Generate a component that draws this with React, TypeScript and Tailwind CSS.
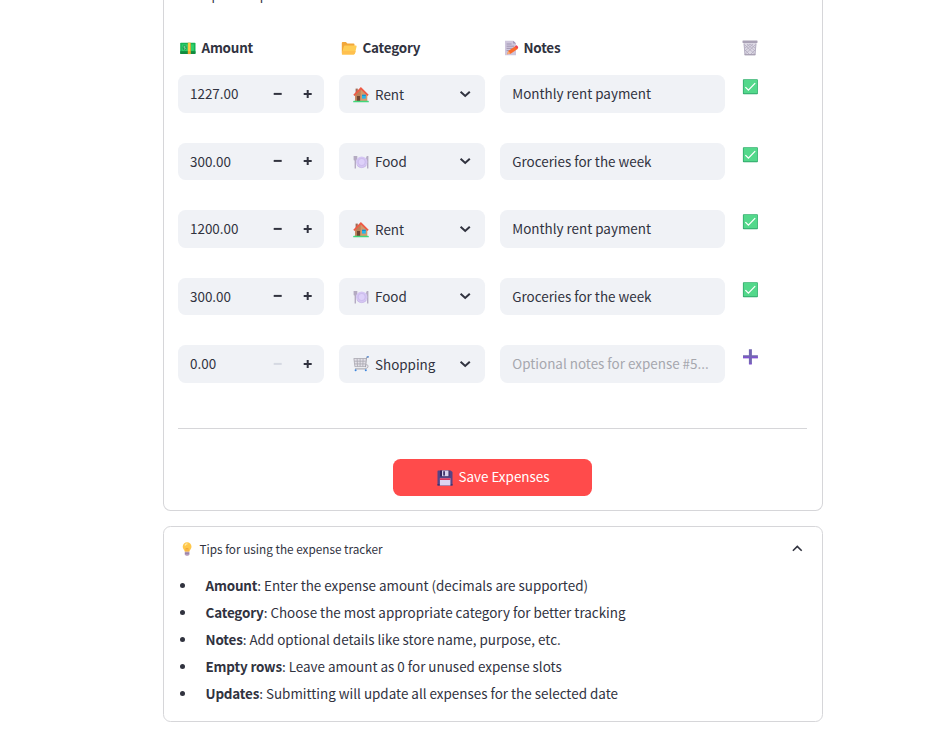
import type { ReactNode } from "react";

function Icon({ children, className = "" }: { children: ReactNode; className?: string }) {
  return (
    <svg viewBox="0 0 16 16" className={`h-4 w-4 shrink-0 ${className}`}>
      {children}
    </svg>
  );
}

const Money = () => (
  <Icon>
    <rect x="0.2" y="2.8" width="15.3" height="11.3" rx="0.8" fill="#16b455" />
    <path d="M.2 11.3h15.3v2a.8.8 0 0 1-.8.8H1a.8.8 0 0 1-.8-.8z" fill="#128a3f" />
    <rect x="1.7" y="4.3" width="12.2" height="6.6" fill="#2fd06d" />
    <ellipse cx="4.6" cy="7.7" rx="2.1" ry="2.6" fill="#139a49" />
    <path d="M5.4 6.3H4v1.4h1.2v1.4H3.8" stroke="#a7e6b8" strokeWidth=".7" fill="none" />
    <rect x="7.8" y="2.8" width="3" height="11.3" fill="#f0a72c" />
    <rect x="8.3" y="2.8" width="1.6" height="8.4" fill="#ffd34a" />
  </Icon>
);
const Folder = () => (
  <Icon>
    <path d="M.8 3q0-.9.9-.9h3.2l1.5 1.5h6.2q.9 0 .9.9V13H.8z" fill="#f2a73a" />
    <path d="M2.8 6.4q.2-.8 1-.8h11q1 0 .8.9l-1.5 6.6q-.3 1.3-1.4 1.3H1.4q-.8 0-.5-1z" fill="#ffcd55" />
    <path d="M1.6 11l-.7 2.4q-.3 1 .5 1h11.3q1.1 0 1.4-1.3l.5-2.1z" fill="#ffc04f" />
  </Icon>
);
const Memo = () => (
  <Icon>
    <path d="M1 .7h8.2L12 3.4v11.8H1z" fill="#cfc6dc" />
    <path d="M9.2.7V3.4H12z" fill="#9f93b3" />
    <path d="M2.6 4h5M2.6 6.2h7.4M2.6 8.4h6M2.6 10.6h3" stroke="#9b91ae" strokeWidth=".9" />
    <path d="M3.2 14.3l1-3.3 7.4-5 2.4 2.7-7.4 5z" fill="#fb6c2d" />
    <path d="M3.2 14.3l1-3.3 2.3 2.6z" fill="#f5b27c" />
    <path d="M11 6.4l1-.9q.7-.4 1.4.4l.6.8q.6.8-.1 1.4l-.9.7z" fill="#ef4052" />
  </Icon>
);
const Trash = () => (
  <Icon>
    <path d="M1.7 3h12.6l-1 12.1H2.7z" fill="#dcd8e4" />
    <path d="M2.4 4.5l10.8 10M13.6 4.5L2.8 14.5M5 4l8 7M11 4l-8 7M8 4l5 4M8 4L3 8M3 10l5 5M13 10l-5 5" stroke="#b0aabd" strokeWidth=".75" fill="none" />
    <path d="M2 3.5l1 11.3h10l1-11.3" fill="none" stroke="#b4aec2" />
    <rect x=".5" y=".6" width="15" height="2.3" rx=".4" fill="#aaa2b6" />
    <path d="M2.6 14.7h10.8" stroke="#a59daf" />
  </Icon>
);
const Check = () => (
  <Icon>
    <rect x=".9" y=".2" width="15" height="15" rx=".8" fill="#32a96c" />
    <rect x="1.7" y=".7" width="13.6" height="13.6" rx=".4" fill="#53d88b" />
    <path d="M3.4 8.1l3 3 6.8-7" fill="none" stroke="#fff" strokeWidth="1.3" />
  </Icon>
);
const House = () => (
  <Icon className="mt-[2px]">
    <rect x="2.6" y="1.6" width="2.2" height="4.6" fill="#a06a55" />
    <path d="M2.2 7.8L8 1.8l6.3 6v6.8H2.2z" fill="#d49a6c" />
    <path d="M2.2 7.8L7.6 2.2v12.4H2.2z" fill="#bd8059" />
    <path d="M.9 8.4L7.9 1.3l7.2 7.1" fill="none" stroke="#ee5a45" strokeWidth="1.7" />
    <rect x="4" y="9" width="3" height="5.5" fill="#704634" />
    <rect x="9" y="7.8" width="3.8" height="3.8" fill="#25b5ec" />
    <path d="M9 7.8h3.8v1H9z" fill="#1689c4" />
    <path d="M.2 14.6q0-.8.8-.8h14q.8 0 .8.8v.6H.2z" fill="#41d87c" />
  </Icon>
);
const Plate = () => (
  <Icon className="mt-px">
    <path d="M.6 1.9h3.7v3.6q0 .9-.9.9H3v8H1.6v-8h-.2q-.8 0-.8-.9z" fill="#b4abc2" />
    <path d="M14 1.9h1.4v12.5H14V9.2h-.9V4.1q0-1.8.9-2.2z" fill="#b4abc2" />
    <circle cx="8.7" cy="8.1" r="5.7" fill="#d5c6f3" />
    <circle cx="8.7" cy="8" r="3.6" fill="#ddd0f9" stroke="#c6b4e8" strokeWidth=".7" />
    <path d="M3.8 10.8a5.6 5.6 0 0 0 9.8 0" fill="none" stroke="#c3b0e2" strokeWidth=".6" />
  </Icon>
);
const Cart = () => (
  <Icon className="mt-px">
    <path d="M.8 2.4h12.2l-.8 8.4H1.8z" fill="#e2e0e7" />
    <path d="M.8 2.5h12.2M1.1 5.2h11.4M1.4 7.9h10.8M1.7 10.6h10.4M.9 2.5l1 8M4.1 2.5l.4 8M7.1 2.5v8M10.1 2.5l-.3 8" stroke="#aaa8b1" strokeWidth=".8" fill="none" />
    <path d="M15.2 1l-1.7.6-1 9.6M2 12.9h11.2" stroke="#96949e" strokeWidth=".9" fill="none" />
    <path d="M13.7.9h2.2" stroke="#3978ca" strokeWidth="1.1" />
    <circle cx="2.6" cy="14.3" r="1" fill="#3d86dd" />
    <circle cx="12.8" cy="14.3" r="1" fill="#3d86dd" />
    <path d="M13 8.6q2.8.1 2 2.4-.5 1.3-2.3 1.5" stroke="#b4b1bb" fill="none" />
  </Icon>
);
const AddMark = () => (
  <Icon>
    <path d="M6.9.2h3v6h6v3h-6v6.1h-3V9.2H1v-3h5.9z" fill="#7467b3" />
    <path d="M1.1 8.7h6.2M9.6 8.7h6.2M7.1 14.9h2.6" stroke="#8a45e3" strokeWidth=".9" fill="none" />
  </Icon>
);
const Floppy = () => (
  <Icon>
    <path d="M.5 1.2q0-.7.7-.7h12.4l1.9 1.6v13.4H.5z" fill="#554485" />
    <path d="M.5 14h15v1.5H.5z" fill="#40316b" />
    <rect x="3.1" y=".5" width="9.2" height="6" fill="#32245c" />
    <rect x="5" y=".5" width="6.5" height="5.7" fill="#d9d1ec" />
    <rect x="6.2" y="1.2" width="1.8" height="4.4" fill="#43346d" />
    <rect x="2.9" y="8.2" width="10.5" height="7.3" fill="#ddd3ef" />
    <rect x="2.9" y="8.2" width="10.5" height="1.8" fill="#d9375f" />
  </Icon>
);
const Bulb = () => (
  <Icon>
    <path d="M3.7 5.7a4.4 4.4 0 1 1 8.8 0c0 2-1.6 2.9-2.1 5H5.8c-.5-2.1-2.1-3-2.1-5z" fill="#ffc84b" />
    <path d="M6 4.4q.7-1.7 2.4-1.4" stroke="#ffeaaa" strokeWidth="1.3" fill="none" />
    <path d="M7 10.5V7.2l1 .8 1-.8v3.3" stroke="#ee9c35" strokeWidth=".7" fill="none" />
    <path d="M5.8 10.7h4.6v2.5l-1 1.5H6.8l-1-1.5z" fill="#b49cba" />
    <path d="M5.9 12.3h4.3" stroke="#89739d" strokeWidth=".7" />
  </Icon>
);

function Step({ plus, faded }: { plus?: boolean; faded?: boolean }) {
  return (
    <svg viewBox="0 0 10 10" className="h-[10px] w-[10px]">
      <path d={plus ? "M.7 4.9h8M4.7.9v8" : "M.7 4.9h8"} stroke={faded ? "#d5d9e2" : "#31333f"} strokeWidth="2" />
    </svg>
  );
}

function Chevron({ up }: { up?: boolean }) {
  return (
    <svg viewBox="0 0 12 8" className="h-2 w-3 shrink-0">
      <path d={up ? "M1.9 5.7L6.3 1.4l4.4 4.3" : "M1.6 1.7l4.6 4.3 4.6-4.3"} fill="none" stroke="#31333f" strokeWidth={up ? "1.6" : "2"} />
    </svg>
  );
}

const rows = [
  { amount: "1227.00", icon: <House />, category: "Rent", note: "Monthly rent payment" },
  { amount: "300.00", icon: <Plate />, category: "Food", note: "Groceries for the week" },
  { amount: "1200.00", icon: <House />, category: "Rent", note: "Monthly rent payment" },
  { amount: "300.00", icon: <Plate />, category: "Food", note: "Groceries for the week" },
  { amount: "0.00", icon: <Cart />, category: "Shopping", note: "" },
];

const tips = [
  ["Amount", "Enter the expense amount (decimals are supported)"],
  ["Category", "Choose the most appropriate category for better tracking"],
  ["Notes", "Add optional details like store name, purpose, etc."],
  ["Empty rows", "Leave amount as 0 for unused expense slots"],
  ["Updates", "Submitting will update all expenses for the selected date"],
];

const grid = "grid grid-cols-[146px_146px_225px_67px] gap-x-[15px]";

export default function App() {
  return (
    <div className="h-[737px] w-[950px] overflow-hidden bg-white pl-[163px] font-['Noto_Sans_CJK_SC','Noto_Sans',sans-serif] text-[13.43px] leading-6 text-[#31333f]">
      <section className="h-[511px] w-[660px] rounded-b-[7.5px] border border-t-0 border-[#d6d6d9] px-[14px]">
        <div className="h-9 overflow-hidden">
          <p className="-mt-[17.5px] text-[12.5px]">Add up to 5 expenses</p>
        </div>
        <div className={`${grid} h-[39px] font-bold tracking-[-0.016em]`}>
          <div className="flex h-6 items-center gap-[5.5px] pl-[2px]"><Money /><span className="-mt-[2px]">Amount</span></div>
          <div className="flex h-6 items-center gap-[5.5px] pl-[2px]"><Folder /><span className="-mt-[2px]">Category</span></div>
          <div className="flex h-6 items-center gap-[3.5px] pl-1"><Memo /><span className="-mt-[2px]">Notes</span></div>
          <div className="flex h-6 items-center pl-[2px]"><Trash /></div>
        </div>
        {rows.map((row, i) => (
          <div key={i} className={`${grid} h-[67.5px]`}>
            <div className="flex h-[37.5px] items-center rounded-[7.5px] bg-[#f0f2f6] pr-[11px] pl-3">
              <span className="flex-1 pb-px">{row.amount}</span>
              <div className="flex gap-5">
                <Step faded={row.amount === "0.00"} />
                <Step plus />
              </div>
            </div>
            <div className="flex h-[37.5px] items-center rounded-[7.5px] bg-[#f0f2f6] pr-[14px] pl-[14px]">
              {row.icon}
              <span className="flex-1 pl-[6px]">{row.category}</span>
              <Chevron />
            </div>
            <div className="flex h-[37.5px] items-center rounded-[7.5px] bg-[#f0f2f6] pb-px pl-[12.25px]">
              {row.note || <span className="text-[#a6a7ae]">Optional notes for expense #5...</span>}
            </div>
            <div className="pt-1 pl-[2px]">{row.note ? <Check /> : <AddMark />}</div>
          </div>
        ))}
        <div className="mt-[15.5px] h-px w-[629px] bg-[#d6d6d9]" />
        <button className="mt-[30px] ml-[215px] flex h-[37px] w-[199px] items-center justify-center gap-[5px] rounded-[7.5px] bg-[#ff4b4b] pl-[2px] text-white">
          <Floppy /><span className="-mt-[3px]">Save Expenses</span>
        </button>
      </section>
      <section className="mt-[15px] h-[196px] w-[660px] rounded-[7.5px] border border-[#d6d6d9] px-[15px]">
        <div className="flex h-11 items-center pr-[4px] text-[11.75px]">
          <Bulb />
          <span className="flex-1 pl-[4.5px]">Tips for using the expense tracker</span>
          <Chevron up />
        </div>
        <ul>
          {tips.map(([name, text]) => (
            <li key={name} className="flex h-[27px] items-center">
              <span className="mt-px mr-[20.5px] ml-[1px] h-[5px] w-[5px] rounded-full bg-[#31333f]" />
              <span><b className="tracking-[-0.012em]">{name}</b>: {text}</span>
            </li>
          ))}
        </ul>
      </section>
    </div>
  );
}
